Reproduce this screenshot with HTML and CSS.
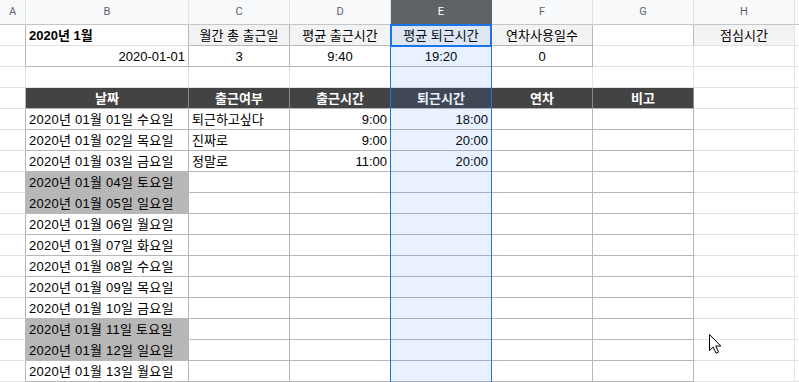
FILE: index.html
```html
<!doctype html>
<html>
  <head>
    <meta charset="utf-8">
    <link rel="stylesheet" href="styles.css">
  </head>
  <body>
    <div class="sheet">
      <div class="grid">
        <!-- column letters -->
        <div class="hd">A</div><div class="hd">B</div><div class="hd">C</div><div class="hd">D</div>
        <div class="hd on">E</div><div class="hd">F</div><div class="hd">G</div><div class="hd">H</div><div class="hd end"></div>

        <!-- row 1 -->
        <div class="cell lb"></div>
        <div class="cell bold rb">2020년 1월</div>
        <div class="cell lab c">월간 총 출근일</div>
        <div class="cell lab c">평균 출근시간</div>
        <div class="cell lab c">평균 퇴근시간</div>
        <div class="cell lab c">연차사용일수</div>
        <div class="cell rb"></div>
        <div class="cell lab c plain">점심시간</div>
        <div class="cell end"></div>

        <!-- row 2 -->
        <div class="cell lb"></div>
        <div class="cell b r">2020-01-01</div>
        <div class="cell b c">3</div>
        <div class="cell b c">9:40</div>
        <div class="cell b c">19:20</div>
        <div class="cell b c">0</div>
        <div class="cell"></div>
        <div class="cell"></div>
        <div class="cell end"></div>

        <!-- row 3 -->
        <div class="cell"></div><div class="cell"></div><div class="cell"></div><div class="cell"></div>
        <div class="cell"></div><div class="cell"></div><div class="cell"></div><div class="cell"></div><div class="cell end"></div>

        <!-- row 4 -->
        <div class="cell lb"></div>
        <div class="cell dark">날짜</div>
        <div class="cell dark">출근여부</div>
        <div class="cell dark">출근시간</div>
        <div class="cell dark">퇴근시간</div>
        <div class="cell dark">연차</div>
        <div class="cell dark">비고</div>
        <div class="cell"></div>
        <div class="cell end"></div>
      </div>
      <div class="grid" id="days"></div>

      <div class="col-select"></div>
      <div class="active-cell"></div>
      <svg class="pointer" width="15" height="23" viewBox="0 0 15 23">
        <path d="M1.5 1.5 L1.5 17.5 L5.2 14 L8 20.2 L10.5 19.1 L7.8 13 L12.8 13 Z" fill="#fff" stroke="#000" stroke-width="1" stroke-linejoin="round"/>
      </svg>
    </div>
    <script>
      (function () {
        var rows = [
          ['수', '퇴근하고싶다', '9:00', '18:00'],
          ['목', '진짜로', '9:00', '20:00'],
          ['금', '정말로', '11:00', '20:00'],
          ['토'], ['일'], ['월'], ['화'], ['수'], ['목'], ['금'], ['토'], ['일'], ['월']
        ];
        var grid = document.getElementById('days');

        function cell(cls, text) {
          var el = document.createElement('div');
          el.className = 'cell ' + cls;
          if (text) el.appendChild(document.createTextNode(text));
          grid.appendChild(el);
        }

        rows.forEach(function (row, i) {
          var day = (i + 1 < 10 ? '0' : '') + (i + 1);
          var weekend = row[0] === '토' || row[0] === '일';
          cell('lb', '');
          cell('b date' + (weekend ? ' we' : ''), '2020년 01월 ' + day + '일 ' + row[0] + '요일');
          cell('b', row[1]);
          cell('b r', row[2]);
          cell('b r', row[3]);
          cell('b', '');
          cell('b', '');
          cell('', '');
          cell('end', '');
        });
      })();
    </script>
  </body>
</html>
```

FILE: styles.css
```css
html, body {
  margin: 0;
  padding: 0;
  background: #fff;
}

body {
  font-family: "Liberation Sans", Arial, "Noto Sans CJK KR", sans-serif;
  font-size: 13px;
  color: #000;
  overflow: hidden;
}

.sheet {
  position: relative;
  width: 799px;
  height: 382px;
  overflow: hidden;
}

.grid {
  display: grid;
  grid-template-columns: 26px 163px repeat(6, 101px) 1fr;
  grid-auto-rows: 21px;
}

.grid:first-child {
  grid-template-rows: 25px;
}

.hd {
  background: #f8f9fa;
  color: #5f6368;
  font-family: Roboto, "Liberation Sans", sans-serif;
  font-size: 11px;
  line-height: 24px;
  text-align: center;
  border-right: 1px solid #e0e2e4;
  border-bottom: 1px solid #c4c7c9;
  box-sizing: border-box;
}

.hd.on {
  background: #5f6368;
  color: #fff;
  border-right-color: #5f6368;
}

.hd.end {
  border-right: 0;
}

.cell {
  box-sizing: border-box;
  border-right: 1px solid #e2e2e2;
  border-bottom: 1px solid #e2e2e2;
  padding: 2px 3px 0;
  line-height: 18px;
  white-space: nowrap;
  overflow: hidden;
}

.cell.end {
  border-right: 0;
}

/* table borders */
.cell.b {
  border-color: #b7b7b7;
}

.cell.lb,
.cell.rb {
  border-right-color: #b7b7b7;
}

.cell.lab {
  background: #f3f3f3;
  border-color: #b7b7b7;
}

.cell.lab.plain {
  border-color: #e2e2e2;
}

.cell.bold {
  font-weight: bold;
}

.cell.r {
  text-align: right;
}

.cell.c {
  text-align: center;
}

.cell.date {
  letter-spacing: 0.25px;
}

.cell.dark {
  background: #434343;
  color: #fff;
  font-weight: bold;
  text-align: center;
  border-color: #8a8a8a;
  border-bottom-color: #b7b7b7;
}

.cell.we {
  background: #b7b7b7;
}

/* selected column E */
.col-select {
  position: absolute;
  left: 390px;
  top: 25px;
  width: 102px;
  bottom: 0;
  box-sizing: border-box;
  border-left: 1px solid #1a73e8;
  border-right: 1px solid #1a73e8;
  background: rgba(26, 115, 232, 0.1);
  pointer-events: none;
}

.active-cell {
  position: absolute;
  left: 390px;
  top: 24px;
  width: 102px;
  height: 23px;
  box-sizing: border-box;
  border: 2px solid #1a73e8;
  pointer-events: none;
}

.pointer {
  position: absolute;
  left: 708px;
  top: 333px;
}
```
